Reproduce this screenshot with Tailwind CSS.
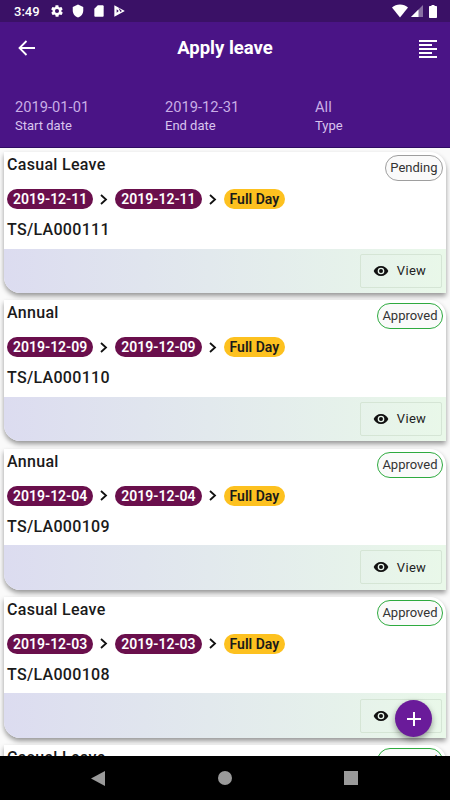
<!DOCTYPE html>
<html lang="en">
<head>
  <meta charset="UTF-8" />
  <title>Apply leave</title>
  <script src="https://cdn.jsdelivr.net/npm/@tailwindcss/browser@4"></script>
</head>
<body class="bg-[#fafafa] font-['Roboto',sans-serif] overflow-hidden">
<div class="relative w-[450px] h-[800px] flex flex-col overflow-hidden">

  <!-- status bar -->
  <div class="h-[22px] shrink-0 bg-[#3a1166] flex items-center pl-[14px] pr-[12px] text-white">
    <span class="text-[13px] font-medium leading-none">3:49</span>
    <svg class="w-[14px] h-[14px] ml-[10px]" viewBox="0 0 24 24" fill="#fff"><path d="M19.4 13c.1-.3.1-.7.1-1s0-.7-.1-1l2.100-1.600c.2-.2.2-.4.1-.6l-2-3.500c-.1-.2-.4-.3-.6-.2l-2.500 1c-.5-.4-1.100-.7-1.700-1l-.4-2.600c0-.3-.2-.5-.5-.5h-4c-.3 0-.5.2-.5.4l-.4 2.700c-.6.2-1.200.6-1.700 1l-2.500-1c-.2-.1-.5 0-.6.2l-2 3.500c-.1.2-.1.5.1.6L4.600 11c-.1.3-.1.7-.1 1s0 .7.1 1l-2.100 1.600c-.2.2-.2.4-.1.6l2 3.500c.1.2.4.3.6.2l2.500-1c.5.4 1.100.7 1.700 1l.4 2.600c0 .2.2.4.5.4h4c.3 0 .5-.2.5-.4l.4-2.600c.6-.3 1.200-.6 1.700-1l2.500 1c.2.1.5 0 .6-.2l2-3.500c.1-.2.1-.5-.1-.6zM12 15.500a3.500 3.500 0 1 1 0-7 3.500 3.500 0 0 1 0 7z"/></svg>
    <svg class="w-[14px] h-[14px] ml-[7px]" viewBox="0 0 24 24" fill="#fff"><path d="M12 1 3 5v6c0 5.500 3.800 10.700 9 12 5.200-1.300 9-6.500 9-12V5z"/></svg>
    <svg class="w-[14px] h-[14px] ml-[7px]" viewBox="0 0 24 24" fill="#fff"><path d="M18 2h-8L4 8v12c0 1.100.9 2 2 2h12c1.100 0 2-.9 2-2V4c0-1.100-.9-2-2-2z"/></svg>
    <svg class="w-[14px] h-[14px] ml-[6px]" viewBox="0 0 24 24" fill="#fff"><path d="M4 2v20l18-10zM8 9l3.500 3L8 15zM11 6.500l6 5.500-2.500 1.500z" fill-rule="evenodd"/></svg>
    <div class="ml-auto flex items-center gap-[3px]">
      <svg class="w-[16px] h-[14px]" viewBox="0 0 16 14" fill="#fff"><path d="M0 3.500C2 1.500 5 .5 8 .5s6 1 8 3l-8 10z"/></svg>
      <svg class="w-[12px] h-[12px]" viewBox="0 0 12 12"><path d="M12 0v12H0z" fill="#fff" fill-opacity=".4"/><path d="M7.500 4.500V12H0z" fill="#fff"/></svg>
      <svg class="w-[8px] h-[13px] ml-[3px] mr-[1px]" viewBox="0 0 8 13" fill="#fff"><path d="M2.500 0h3v1H7c.6 0 1 .4 1 1v10c0 .6-.4 1-1 1H1c-.6 0-1-.4-1-1V2c0-.6.4-1 1-1h1.500z"/></svg>
    </div>
  </div>

  <!-- header -->
  <div class="h-[126px] shrink-0 bg-[#4a1486] border-b border-[#2f0c63]">
    <div class="h-[53px] flex items-center pl-[18px] pr-[13px]">
      <svg class="w-[17px] h-[16px] mb-[1px]" viewBox="0 0 17 16" fill="none" stroke="#fff" stroke-width="1.800"><path d="M17 8H1.500M8.500 1 1.500 8l7 7"/></svg>
      <div class="flex-1 text-center text-white text-[18.500px] font-bold mr-[4px]">Apply leave</div>
      <svg class="w-[18px] h-[18px]" viewBox="0 0 18 18" fill="#fff"><path d="M0 0h18v2H0zM0 4h13v2H0zM0 8h18v2H0zM0 12h13v2H0zM0 16h18v2H0z"/></svg>
    </div>
    <div class="grid grid-cols-[150px_150px_150px] pl-[15px] pt-[23px] text-[#d9c4ee]">
      <div><div class="text-[14.700px] leading-[18px] text-[#c9aee6]">2019-01-01</div><div class="text-[13px] leading-[18px] mt-px">Start date</div></div>
      <div><div class="text-[14.700px] leading-[18px] text-[#c9aee6]">2019-12-31</div><div class="text-[13px] leading-[18px] mt-px">End date</div></div>
      <div><div class="text-[14.700px] leading-[18px] text-[#c9aee6]">All</div><div class="text-[13px] leading-[18px] mt-px">Type</div></div>
    </div>
  </div>

  <!-- leave list -->
  <div class="flex-1 min-h-0 overflow-hidden flex flex-col gap-[7.300px] pt-[4px] px-[4px]">

    <div class="shrink-0 h-[141px] bg-white rounded-tr-[16px] rounded-bl-[16px] shadow-[0_3px_5px_rgba(0,0,0,0.4)] flex flex-col overflow-hidden">
      <div class="h-[96.500px] px-[3px]">
        <div class="flex justify-between items-start">
          <span class="mt-[2px] text-[16px] font-medium leading-[21px] tracking-[0.3px] text-[#1a1a1a]">Casual Leave</span>
          <span class="mt-[3px] h-[26px] px-[4.500px] rounded-full border border-[#9e9e9e] bg-[#fafafa] text-[13px] leading-[23px] text-[#333]">Pending</span>
        </div>
        <div class="flex items-center mt-[8px] text-[14px] font-semibold leading-[20px]">
          <span class="px-[6px] rounded-full bg-[#6a0f4c] text-white">2019-12-11</span>
          <svg class="w-[8px] h-[11px] mx-[7px]" viewBox="0 0 8 11" fill="none" stroke="#111" stroke-width="1.800"><path d="M1 1l5 4.500L1 10"/></svg>
          <span class="px-[6px] rounded-full bg-[#6a0f4c] text-white">2019-12-11</span>
          <svg class="w-[8px] h-[11px] mx-[7px]" viewBox="0 0 8 11" fill="none" stroke="#111" stroke-width="1.800"><path d="M1 1l5 4.500L1 10"/></svg>
          <span class="px-[6px] rounded-full bg-[#fdc11f] text-[#1a1a1a]">Full Day</span>
        </div>
        <div class="mt-[10px] text-[16px] font-medium leading-[21px] tracking-[0.3px] text-[#1a1a1a]">TS/LA000111</div>
      </div>
      <div class="flex-1 bg-gradient-to-r from-[#dcdcf0] to-[#e9f8e9] flex justify-end items-center pr-[4px]">
        <div class="w-[82px] h-[34px] pr-[3px] rounded-[2px] border border-[#d5e5d5] flex items-center justify-center gap-[8px] text-[13px] tracking-[0.3px] text-[#222]">
          <svg class="w-[16px] h-[16px]" viewBox="0 0 24 24" fill="#111"><path d="M12 4.500C7 4.500 2.700 7.600 1 12c1.700 4.400 6 7.500 11 7.500s9.300-3.100 11-7.500c-1.700-4.400-6-7.500-11-7.500zM12 17a5 5 0 1 1 0-10 5 5 0 0 1 0 10zm0-8a3 3 0 1 0 0 6 3 3 0 0 0 0-6z"/></svg>
          View
        </div>
      </div>
    </div>

    <div class="shrink-0 h-[141px] bg-white rounded-tr-[16px] rounded-bl-[16px] shadow-[0_3px_5px_rgba(0,0,0,0.4)] flex flex-col overflow-hidden">
      <div class="h-[96.500px] px-[3px]">
        <div class="flex justify-between items-start">
          <span class="mt-[2px] text-[16px] font-medium leading-[21px] tracking-[0.3px] text-[#1a1a1a]">Annual</span>
          <span class="mt-[3px] h-[26px] px-[4.500px] rounded-full border border-[#2eaa3f] bg-[#fafafa] text-[13px] leading-[23px] text-[#333]">Approved</span>
        </div>
        <div class="flex items-center mt-[8px] text-[14px] font-semibold leading-[20px]">
          <span class="px-[6px] rounded-full bg-[#6a0f4c] text-white">2019-12-09</span>
          <svg class="w-[8px] h-[11px] mx-[7px]" viewBox="0 0 8 11" fill="none" stroke="#111" stroke-width="1.800"><path d="M1 1l5 4.500L1 10"/></svg>
          <span class="px-[6px] rounded-full bg-[#6a0f4c] text-white">2019-12-09</span>
          <svg class="w-[8px] h-[11px] mx-[7px]" viewBox="0 0 8 11" fill="none" stroke="#111" stroke-width="1.800"><path d="M1 1l5 4.500L1 10"/></svg>
          <span class="px-[6px] rounded-full bg-[#fdc11f] text-[#1a1a1a]">Full Day</span>
        </div>
        <div class="mt-[10px] text-[16px] font-medium leading-[21px] tracking-[0.3px] text-[#1a1a1a]">TS/LA000110</div>
      </div>
      <div class="flex-1 bg-gradient-to-r from-[#dcdcf0] to-[#e9f8e9] flex justify-end items-center pr-[4px]">
        <div class="w-[82px] h-[34px] pr-[3px] rounded-[2px] border border-[#d5e5d5] flex items-center justify-center gap-[8px] text-[13px] tracking-[0.3px] text-[#222]">
          <svg class="w-[16px] h-[16px]" viewBox="0 0 24 24" fill="#111"><path d="M12 4.500C7 4.500 2.700 7.600 1 12c1.700 4.400 6 7.500 11 7.500s9.300-3.100 11-7.500c-1.700-4.400-6-7.500-11-7.500zM12 17a5 5 0 1 1 0-10 5 5 0 0 1 0 10zm0-8a3 3 0 1 0 0 6 3 3 0 0 0 0-6z"/></svg>
          View
        </div>
      </div>
    </div>

    <div class="shrink-0 h-[141px] bg-white rounded-tr-[16px] rounded-bl-[16px] shadow-[0_3px_5px_rgba(0,0,0,0.4)] flex flex-col overflow-hidden">
      <div class="h-[96.500px] px-[3px]">
        <div class="flex justify-between items-start">
          <span class="mt-[2px] text-[16px] font-medium leading-[21px] tracking-[0.3px] text-[#1a1a1a]">Annual</span>
          <span class="mt-[3px] h-[26px] px-[4.500px] rounded-full border border-[#2eaa3f] bg-[#fafafa] text-[13px] leading-[23px] text-[#333]">Approved</span>
        </div>
        <div class="flex items-center mt-[8px] text-[14px] font-semibold leading-[20px]">
          <span class="px-[6px] rounded-full bg-[#6a0f4c] text-white">2019-12-04</span>
          <svg class="w-[8px] h-[11px] mx-[7px]" viewBox="0 0 8 11" fill="none" stroke="#111" stroke-width="1.800"><path d="M1 1l5 4.500L1 10"/></svg>
          <span class="px-[6px] rounded-full bg-[#6a0f4c] text-white">2019-12-04</span>
          <svg class="w-[8px] h-[11px] mx-[7px]" viewBox="0 0 8 11" fill="none" stroke="#111" stroke-width="1.800"><path d="M1 1l5 4.500L1 10"/></svg>
          <span class="px-[6px] rounded-full bg-[#fdc11f] text-[#1a1a1a]">Full Day</span>
        </div>
        <div class="mt-[10px] text-[16px] font-medium leading-[21px] tracking-[0.3px] text-[#1a1a1a]">TS/LA000109</div>
      </div>
      <div class="flex-1 bg-gradient-to-r from-[#dcdcf0] to-[#e9f8e9] flex justify-end items-center pr-[4px]">
        <div class="w-[82px] h-[34px] pr-[3px] rounded-[2px] border border-[#d5e5d5] flex items-center justify-center gap-[8px] text-[13px] tracking-[0.3px] text-[#222]">
          <svg class="w-[16px] h-[16px]" viewBox="0 0 24 24" fill="#111"><path d="M12 4.500C7 4.500 2.700 7.600 1 12c1.700 4.400 6 7.500 11 7.500s9.300-3.100 11-7.500c-1.700-4.400-6-7.500-11-7.500zM12 17a5 5 0 1 1 0-10 5 5 0 0 1 0 10zm0-8a3 3 0 1 0 0 6 3 3 0 0 0 0-6z"/></svg>
          View
        </div>
      </div>
    </div>

    <div class="shrink-0 h-[141px] bg-white rounded-tr-[16px] rounded-bl-[16px] shadow-[0_3px_5px_rgba(0,0,0,0.4)] flex flex-col overflow-hidden">
      <div class="h-[96.500px] px-[3px]">
        <div class="flex justify-between items-start">
          <span class="mt-[2px] text-[16px] font-medium leading-[21px] tracking-[0.3px] text-[#1a1a1a]">Casual Leave</span>
          <span class="mt-[3px] h-[26px] px-[4.500px] rounded-full border border-[#2eaa3f] bg-[#fafafa] text-[13px] leading-[23px] text-[#333]">Approved</span>
        </div>
        <div class="flex items-center mt-[8px] text-[14px] font-semibold leading-[20px]">
          <span class="px-[6px] rounded-full bg-[#6a0f4c] text-white">2019-12-03</span>
          <svg class="w-[8px] h-[11px] mx-[7px]" viewBox="0 0 8 11" fill="none" stroke="#111" stroke-width="1.800"><path d="M1 1l5 4.500L1 10"/></svg>
          <span class="px-[6px] rounded-full bg-[#6a0f4c] text-white">2019-12-03</span>
          <svg class="w-[8px] h-[11px] mx-[7px]" viewBox="0 0 8 11" fill="none" stroke="#111" stroke-width="1.800"><path d="M1 1l5 4.500L1 10"/></svg>
          <span class="px-[6px] rounded-full bg-[#fdc11f] text-[#1a1a1a]">Full Day</span>
        </div>
        <div class="mt-[10px] text-[16px] font-medium leading-[21px] tracking-[0.3px] text-[#1a1a1a]">TS/LA000108</div>
      </div>
      <div class="flex-1 bg-gradient-to-r from-[#dcdcf0] to-[#e9f8e9] flex justify-end items-center pr-[4px]">
        <div class="w-[82px] h-[34px] pr-[3px] rounded-[2px] border border-[#d5e5d5] flex items-center justify-center gap-[8px] text-[13px] tracking-[0.3px] text-[#222]">
          <svg class="w-[16px] h-[16px]" viewBox="0 0 24 24" fill="#111"><path d="M12 4.500C7 4.500 2.700 7.600 1 12c1.700 4.400 6 7.500 11 7.500s9.300-3.100 11-7.500c-1.700-4.400-6-7.500-11-7.500zM12 17a5 5 0 1 1 0-10 5 5 0 0 1 0 10zm0-8a3 3 0 1 0 0 6 3 3 0 0 0 0-6z"/></svg>
          View
        </div>
      </div>
    </div>

    <div class="shrink-0 h-[141px] bg-white rounded-tr-[16px] rounded-bl-[16px] shadow-[0_3px_5px_rgba(0,0,0,0.4)] flex flex-col overflow-hidden">
      <div class="h-[96.500px] px-[3px]">
        <div class="flex justify-between items-start">
          <span class="mt-[2px] text-[16px] font-medium leading-[21px] tracking-[0.3px] text-[#1a1a1a]">Casual Leave</span>
          <span class="mt-[3px] h-[26px] px-[4.500px] rounded-full border border-[#2eaa3f] bg-[#fafafa] text-[13px] leading-[23px] text-[#333]">Approved</span>
        </div>
      </div>
    </div>
  </div>

  <!-- android nav -->
  <div class="h-[44.500px] shrink-0 bg-black relative z-10">
    <svg class="w-[14px] h-[15px] absolute left-[91px] top-[15px]" viewBox="0 0 14 15" fill="#9a9a9a"><path d="M14 0v15L0 7.500z"/></svg>
    <div class="w-[14px] h-[14px] rounded-full bg-[#9a9a9a] absolute left-[218px] top-[15px]"></div>
    <div class="w-[14px] h-[14px] bg-[#9a9a9a] absolute left-[344px] top-[15px]"></div>
  </div>

  <!-- add button -->
  <button class="absolute z-20 left-[395px] top-[700px] w-[37px] h-[37px] rounded-full bg-[#6a1b9a] shadow-[0_3px_6px_rgba(0,0,0,0.4)] flex items-center justify-center">
    <svg class="w-[14px] h-[14px]" viewBox="0 0 14 14" fill="#fff"><path d="M6 0h2v6h6v2H8v6H6V8H0V6h6z"/></svg>
  </button>
</div>
</body>
</html>
